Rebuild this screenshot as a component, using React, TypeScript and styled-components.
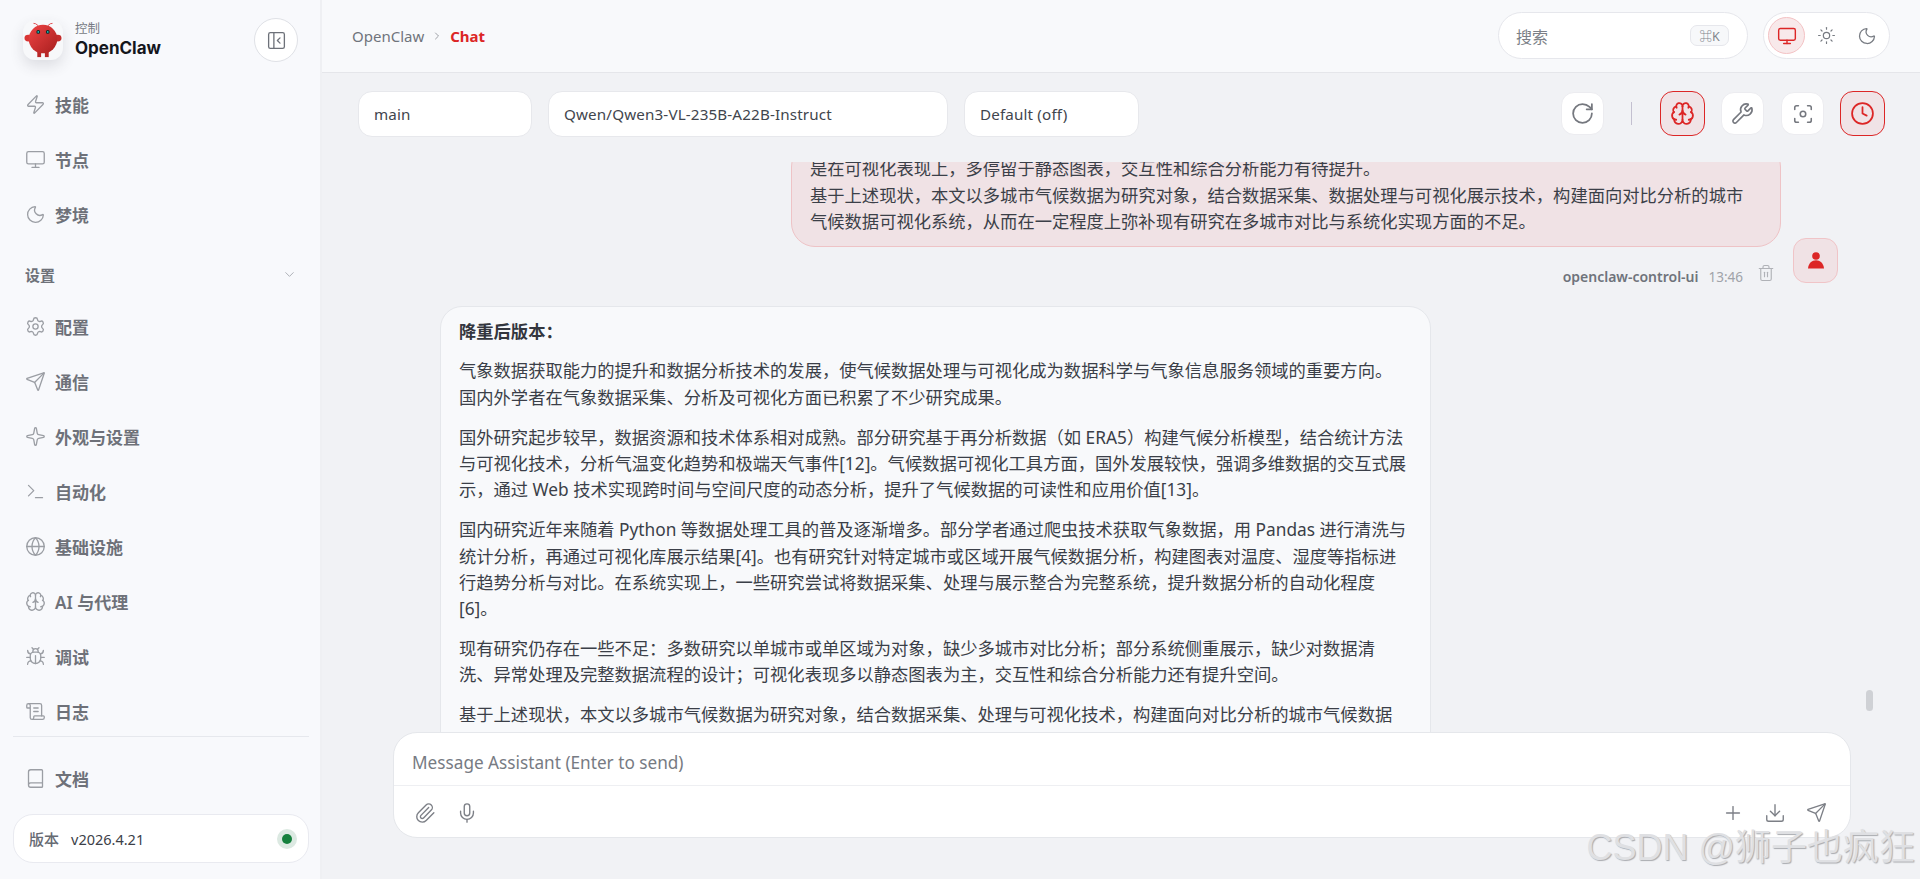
import React from "react";
import styled, { createGlobalStyle } from "styled-components";
import {
  Zap, Monitor, Moon, Settings, Send, Sparkle, Terminal, Globe, Brain, Bug, ScrollText, Book,
  PanelLeftClose, ChevronDown, ChevronRight, Sun, RotateCw, Wrench, Focus, Clock, Trash2,
  Paperclip, Mic, Plus, Download,
} from "lucide-react";

const SANS = `"Noto Sans", "Noto Sans CJK SC", sans-serif`;
const RED = "#dc2626";

const Global = createGlobalStyle`
  html, body { margin: 0; padding: 0; height: 100%; overflow: hidden; }
  body { font-family: ${SANS}; background: #f1f2f5; color: #3b3f48; }
  #root { height: 100%; }
  * { box-sizing: border-box; }
`;

const Shell = styled.div`
  display: grid;
  grid-template-columns: 322px 1fr;
  height: 100vh;
  position: relative;
`;

const Sidebar = styled.aside`
  display: flex;
  flex-direction: column;
  padding: 18px 11px 16px 13px;
  background: #f8f9fc;
  border-right: 2px solid #eff0f3;
  height: 100vh;
`;

const Brand = styled.div`
  display: flex;
  align-items: center;
  height: 44px;
  padding-left: 10px;
  margin-bottom: 20px;
`;

const LogoBox = styled.div`
  width: 40px;
  height: 40px;
  border-radius: 12px;
  background: #f7f8fa;
  box-shadow: 0 6px 14px rgba(60, 60, 70, 0.14);
  display: flex;
  align-items: center;
  justify-content: center;
`;

const BrandText = styled.div`
  display: flex;
  flex-direction: column;
  margin-left: 12px;
  flex: 1;
`;

const BrandSub = styled.span`
  font-size: 12.5px;
  line-height: 17px;
  color: #777b84;
`;

const BrandName = styled.span`
  font-family: Inter, ${SANS};
  font-size: 17px;
  line-height: 23px;
  font-weight: 700;
  color: #14161c;
`;

const CollapseButton = styled.button`
  width: 44px;
  height: 44px;
  margin-right: 11px;
  border-radius: 50%;
  border: 1px solid #dfe1e6;
  background: #fff;
  color: #6d7179;
  display: flex;
  align-items: center;
  justify-content: center;
  padding: 0;
`;

const NavGroup = styled.nav`
  display: flex;
  flex-direction: column;
  gap: 11px;
`;

const NavRow = styled.div`
  display: flex;
  align-items: center;
  gap: 9.5px;
  height: 44px;
  padding-left: 11.5px;
  font-size: 17px;
  font-weight: 600;
  color: #6e7179;
  svg { color: #9b9ea4; flex: none; }
`;

const SectionLabel = styled.div`
  display: flex;
  align-items: center;
  justify-content: space-between;
  height: 20px;
  margin: 28px 0 20px;
  padding: 0 12px;
  font-size: 15px;
  font-weight: 600;
  color: #6e7179;
  svg { color: #a9acb2; }
`;

const Rule = styled.hr`
  border: 0;
  border-top: 1px solid #e6e8ed;
  margin: 3px 0 0;
  width: 100%;
`;

const DocsRow = styled(NavRow)`
  margin-top: 20px;
`;

const VersionCard = styled.div`
  margin-top: 14px;
  height: 50px;
  display: flex;
  align-items: center;
  padding: 0 11px 0 15px;
  background: #fff;
  border: 1px solid #e9eaf0;
  border-radius: 20px;
  font-size: 15px;
`;

const VersionLabel = styled.span`
  font-weight: 500;
  color: #666a72;
  margin-right: 12px;
`;

const VersionValue = styled.span`
  flex: 1;
  font-size: 14.5px;
  color: #3c4048;
`;

const StatusDot = styled.span`
  width: 20px;
  height: 20px;
  border-radius: 50%;
  background: #dce9e2;
  display: flex;
  align-items: center;
  justify-content: center;
  &::after {
    content: "";
    width: 10px;
    height: 10px;
    border-radius: 50%;
    background: #15803d;
  }
`;

const Main = styled.main`
  display: flex;
  flex-direction: column;
  height: 100vh;
  min-width: 0;
`;

const Header = styled.header`
  flex: none;
  height: 73px;
  display: flex;
  align-items: center;
  padding: 0 30px 1px 30px;
  background: #f8f9fb;
  border-bottom: 1px solid #e5e6ea;
`;

const Crumbs = styled.div`
  display: flex;
  align-items: center;
  flex: 1;
  font-size: 15px;
  color: #70747c;
  svg { margin: 0 6px 0 7px; color: #808389; }
`;

const CrumbNow = styled.span`
  font-weight: 700;
  color: ${RED};
  margin-left: 1px;
`;

const Search = styled.div`
  width: 250px;
  height: 47px;
  display: flex;
  align-items: center;
  justify-content: space-between;
  padding: 0 18px 0 17px;
  background: #fff;
  border: 1px solid #e6e7ec;
  border-radius: 24px;
  font-size: 16px;
  color: #7b7f87;
`;

const Kbd = styled.span`
  width: 39px;
  height: 21px;
  display: flex;
  align-items: center;
  justify-content: center;
  border: 1px solid #e6e7ec;
  background: #f7f8fa;
  border-radius: 7px;
  font-size: 12.5px;
  color: #82868d;
`;

const ThemeGroup = styled.div`
  margin-left: 15px;
  width: 127px;
  height: 47px;
  display: flex;
  align-items: center;
  gap: 3px;
  padding: 0 4px;
  background: #fff;
  border: 1px solid #e6e7ec;
  border-radius: 24px;
`;

const ThemeButton = styled.span<{ $active?: boolean }>`
  width: 37px;
  height: 37px;
  border-radius: 50%;
  display: flex;
  align-items: center;
  justify-content: center;
  color: ${(p) => (p.$active ? RED : "#777b82")};
  background: ${(p) => (p.$active ? "#f8e9ea" : "transparent")};
  border: 1px solid ${(p) => (p.$active ? "#f4c2c4" : "transparent")};
`;

const Toolbar = styled.div`
  flex: none;
  height: 89px;
  display: flex;
  align-items: center;
  padding: 0 35px 8px 36px;
`;

const Field = styled.div<{ $width: number }>`
  width: ${(p) => p.$width}px;
  height: 46px;
  margin-right: 16px;
  display: flex;
  align-items: center;
  padding: 0 15px;
  background: #fff;
  border: 1px solid #e7e8ec;
  border-radius: 14px;
  font-size: 15.2px;
  letter-spacing: 0.15px;
  color: #41454d;
  white-space: nowrap;
`;

const ToolSpacer = styled.div`
  flex: 1;
`;

const ToolButton = styled.span<{ $on?: boolean }>`
  width: ${(p) => (p.$on ? 45 : 43)}px;
  height: ${(p) => (p.$on ? 45 : 43)}px;
  display: flex;
  align-items: center;
  justify-content: center;
  border-radius: 13px;
  background: ${(p) => (p.$on ? "#f0e3e6" : "#fff")};
  border: ${(p) => (p.$on ? `1.5px solid ${RED}` : "1px solid #ececf0")};
  color: ${(p) => (p.$on ? RED : "#75787f")};
`;

const ToolGap = styled.span<{ $w: number }>`
  width: ${(p) => p.$w}px;
`;

const ToolDivider = styled.span`
  width: 1px;
  height: 23px;
  margin: 0 28px 0 27px;
  background: #c3c0d0;
`;

const Thread = styled.section`
  flex: 1;
  min-height: 0;
  overflow: hidden;
  padding: 0 82px 0 72px;
  position: relative;
`;

const UserRow = styled.div`
  display: flex;
  justify-content: flex-end;
  align-items: flex-end;
  gap: 12px;
  margin-top: -19px;
`;

const UserStack = styled.div`
  width: 990px;
`;

const UserBubble = styled.div`
  padding: 12px 21px 10px 18px;
  background: #f0e2e5;
  border: 1px solid #eec3c6;
  border-radius: 24px;
  font-size: 17.3px;
  line-height: 26.6px;
  color: #3b3f48;
`;

const Meta = styled.div`
  height: 36px;
  display: flex;
  align-items: center;
  justify-content: flex-end;
  padding: 24px 6px 0 0;
  color: #b0b2b7;
  svg { margin-top: -8px; }
`;

const MetaName = styled.span`
  font-size: 14px;
  font-weight: 600;
  color: #6f737b;
  margin-right: 10px;
`;

const MetaTime = styled.span`
  font-size: 13.5px;
  color: #a0a3a9;
  margin-right: 14px;
`;

const Avatar = styled.div`
  width: 45px;
  height: 45px;
  flex: none;
  display: flex;
  align-items: center;
  justify-content: center;
  background: #f0e2e5;
  border: 1px solid #f0c4c7;
  border-radius: 13px;
`;

const AssistantBubble = styled.article`
  width: 991px;
  margin-top: 23px;
  margin-left: 46px;
  padding: 12px 22px 12px 18px;
  background: #f8f9fb;
  border: 1px solid #e5e7eb;
  border-radius: 22px;
  font-size: 17.3px;
  line-height: 26.4px;
  color: #3b3f48;
`;

const Para = styled.p`
  margin: 0 0 13.3px;
`;

const Strong = styled.strong`
  font-weight: 600;
  color: #33363e;
`;

const ScrollThumb = styled.span`
  position: absolute;
  right: 47px;
  top: 528px;
  width: 7px;
  height: 21px;
  border-radius: 4px;
  background: #cfd1d5;
`;

const Dock = styled.div`
  flex: none;
  height: 147px;
  padding: 0 69px 41px 71px;
`;

const Composer = styled.div`
  height: 106px;
  display: flex;
  flex-direction: column;
  background: #fff;
  border: 1px solid #e5e7eb;
  border-radius: 24px;
  position: relative;
`;

const ComposerInput = styled.div`
  height: 53px;
  display: flex;
  align-items: center;
  padding: 6px 18px 0;
  border-bottom: 1px solid #eeeff2;
  font-size: 17.2px;
  color: #777b83;
`;

const ComposerActions = styled.div`
  flex: 1;
  display: flex;
  align-items: center;
  gap: 20px;
  padding: 2px 23px 0 20px;
  color: #7c7f86;
`;

const ActionSpacer = styled.div`
  flex: 1;
`;

const Watermark = styled.div`
  position: absolute;
  right: 5px;
  bottom: 9px;
  font-family: "Liberation Sans", "Noto Sans CJK SC", sans-serif;
  font-size: 36px;
  line-height: 44px;
  color: #dfe0e3;
  text-shadow: 1px 1px 1px #a9abb0;
  white-space: nowrap;
`;

const IC = { size: 21, strokeWidth: 1.5 };
const TOOL = 1.7;

const topItems = [
  { icon: Zap, label: "技能" },
  { icon: Monitor, label: "节点" },
  { icon: Moon, label: "梦境" },
];

const settingItems = [
  { icon: Settings, label: "配置" },
  { icon: Send, label: "通信" },
  { icon: Sparkle, label: "外观与设置" },
  { icon: Terminal, label: "自动化" },
  { icon: Globe, label: "基础设施" },
  { icon: Brain, label: "AI 与代理" },
  { icon: Bug, label: "调试" },
  { icon: ScrollText, label: "日志" },
];

const paragraphs = [
  "气象数据获取能力的提升和数据分析技术的发展，使气候数据处理与可视化成为数据科学与气象信息服务领域的重要方向。国内外学者在气象数据采集、分析及可视化方面已积累了不少研究成果。",
  "国外研究起步较早，数据资源和技术体系相对成熟。部分研究基于再分析数据（如 ERA5）构建气候分析模型，结合统计方法与可视化技术，分析气温变化趋势和极端天气事件[12]。气候数据可视化工具方面，国外发展较快，强调多维数据的交互式展示，通过 Web 技术实现跨时间与空间尺度的动态分析，提升了气候数据的可读性和应用价值[13]。",
  "国内研究近年来随着 Python 等数据处理工具的普及逐渐增多。部分学者通过爬虫技术获取气象数据，用 Pandas 进行清洗与统计分析，再通过可视化库展示结果[4]。也有研究针对特定城市或区域开展气候数据分析，构建图表对温度、湿度等指标进行趋势分析与对比。在系统实现上，一些研究尝试将数据采集、处理与展示整合为完整系统，提升数据分析的自动化程度[6]。",
  "现有研究仍存在一些不足：多数研究以单城市或单区域为对象，缺少多城市对比分析；部分系统侧重展示，缺少对数据清洗、异常处理及完整数据流程的设计；可视化表现多以静态图表为主，交互性和综合分析能力还有提升空间。",
  "基于上述现状，本文以多城市气候数据为研究对象，结合数据采集、处理与可视化技术，构建面向对比分析的城市气候数据可视化系统，以期在一定程度上弥补现有研究的不足。",
];

function Logo() {
  return (
    <svg width="38" height="38" viewBox="0 0 40 40" aria-hidden="true">
      <defs>
        <linearGradient id="claw" x1="0" y1="0" x2="1" y2="1">
          <stop offset="0" stopColor="#ef4444" />
          <stop offset="1" stopColor="#a81f1f" />
        </linearGradient>
      </defs>
      <path d="M15 5 Q12 2 10 2.5 M25 5 Q28 2 30 2.5" stroke="#e0484c" strokeWidth="1" fill="none" />
      <ellipse cx="4.5" cy="18" rx="4" ry="3.6" fill="#d93434" />
      <ellipse cx="35.5" cy="18" rx="4" ry="3.6" fill="#c42c2c" />
      <rect x="14" y="32" width="4" height="6" fill="#b92828" />
      <rect x="22" y="32" width="4" height="6" fill="#b92828" />
      <circle cx="20" cy="19" r="15" fill="url(#claw)" />
      <circle cx="15" cy="11.5" r="2" fill="#082a2c" />
      <circle cx="25" cy="11.5" r="2" fill="#082a2c" />
      <circle cx="15" cy="11.5" r="0.9" fill="#1fc8c0" />
      <circle cx="25" cy="11.5" r="0.9" fill="#1fc8c0" />
    </svg>
  );
}

function UserGlyph() {
  return (
    <svg width="18" height="18" viewBox="0 0 18 18" aria-hidden="true" fill={RED}>
      <circle cx="9" cy="5" r="3.8" />
      <path d="M1 17.5 C1.5 12 5 9.2 9 9.2 C13 9.2 16.5 12 17 17.5 Z" />
    </svg>
  );
}

export default function App() {
  return (
    <Shell>
      <Global />
      <Sidebar>
        <Brand>
          <LogoBox><Logo /></LogoBox>
          <BrandText>
            <BrandSub>控制</BrandSub>
            <BrandName>OpenClaw</BrandName>
          </BrandText>
          <CollapseButton><PanelLeftClose size={21} strokeWidth={1.5} /></CollapseButton>
        </Brand>
        <NavGroup>
          {topItems.map(({ icon: Icon, label }) => (
            <NavRow key={label}><Icon {...IC} />{label}</NavRow>
          ))}
        </NavGroup>
        <SectionLabel>设置<ChevronDown size={15} strokeWidth={1.5} /></SectionLabel>
        <NavGroup>
          {settingItems.map(({ icon: Icon, label }) => (
            <NavRow key={label}><Icon {...IC} />{label}</NavRow>
          ))}
        </NavGroup>
        <Rule />
        <DocsRow><Book {...IC} />文档</DocsRow>
        <VersionCard>
          <VersionLabel>版本</VersionLabel>
          <VersionValue>v2026.4.21</VersionValue>
          <StatusDot />
        </VersionCard>
      </Sidebar>
      <Main>
        <Header>
          <Crumbs>OpenClaw<ChevronRight size={12} strokeWidth={1.5} /><CrumbNow>Chat</CrumbNow></Crumbs>
          <Search>搜索<Kbd>⌘K</Kbd></Search>
          <ThemeGroup>
            <ThemeButton $active><Monitor size={20} strokeWidth={TOOL} /></ThemeButton>
            <ThemeButton><Sun size={19} strokeWidth={1.5} /></ThemeButton>
            <ThemeButton><Moon size={20} strokeWidth={1.5} /></ThemeButton>
          </ThemeGroup>
        </Header>
        <Toolbar>
          <Field $width={174}>main</Field>
          <Field $width={400}>Qwen/Qwen3-VL-235B-A22B-Instruct</Field>
          <Field $width={175}>Default (off)</Field>
          <ToolSpacer />
          <ToolButton><RotateCw size={25} strokeWidth={TOOL} /></ToolButton>
          <ToolDivider />
          <ToolButton $on><Brain size={25} strokeWidth={TOOL} /></ToolButton>
          <ToolGap $w={16} />
          <ToolButton><Wrench size={23} strokeWidth={TOOL} /></ToolButton>
          <ToolGap $w={17} />
          <ToolButton><Focus size={22} strokeWidth={TOOL} /></ToolButton>
          <ToolGap $w={16} />
          <ToolButton $on><Clock size={25} strokeWidth={TOOL} /></ToolButton>
        </Toolbar>
        <Thread>
          <UserRow>
            <UserStack>
              <UserBubble>
                是在可视化表现上，多停留于静态图表，交互性和综合分析能力有待提升。<br />
                基于上述现状，本文以多城市气候数据为研究对象，结合数据采集、数据处理与可视化展示技术，构建面向对比分析的城市气候数据可视化系统，从而在一定程度上弥补现有研究在多城市对比与系统化实现方面的不足。
              </UserBubble>
              <Meta>
                <MetaName>openclaw-control-ui</MetaName>
                <MetaTime>13:46</MetaTime>
                <Trash2 size={18} strokeWidth={1.5} />
              </Meta>
            </UserStack>
            <Avatar><UserGlyph /></Avatar>
          </UserRow>
          <AssistantBubble>
            <Para><Strong>降重后版本：</Strong></Para>
            {paragraphs.map((t) => <Para key={t.slice(0, 12)}>{t}</Para>)}
          </AssistantBubble>
          <ScrollThumb />
        </Thread>
        <Dock>
          <Composer>
            <ComposerInput>Message Assistant (Enter to send)</ComposerInput>
            <ComposerActions>
              <Paperclip size={22} strokeWidth={1.5} />
              <Mic size={22} strokeWidth={1.5} />
              <ActionSpacer />
              <Plus size={22} strokeWidth={1.5} />
              <Download size={22} strokeWidth={1.5} />
              <Send size={21} strokeWidth={1.5} />
            </ComposerActions>
          </Composer>
        </Dock>
      </Main>
      <Watermark>CSDN @狮子也疯狂</Watermark>
    </Shell>
  );
}
